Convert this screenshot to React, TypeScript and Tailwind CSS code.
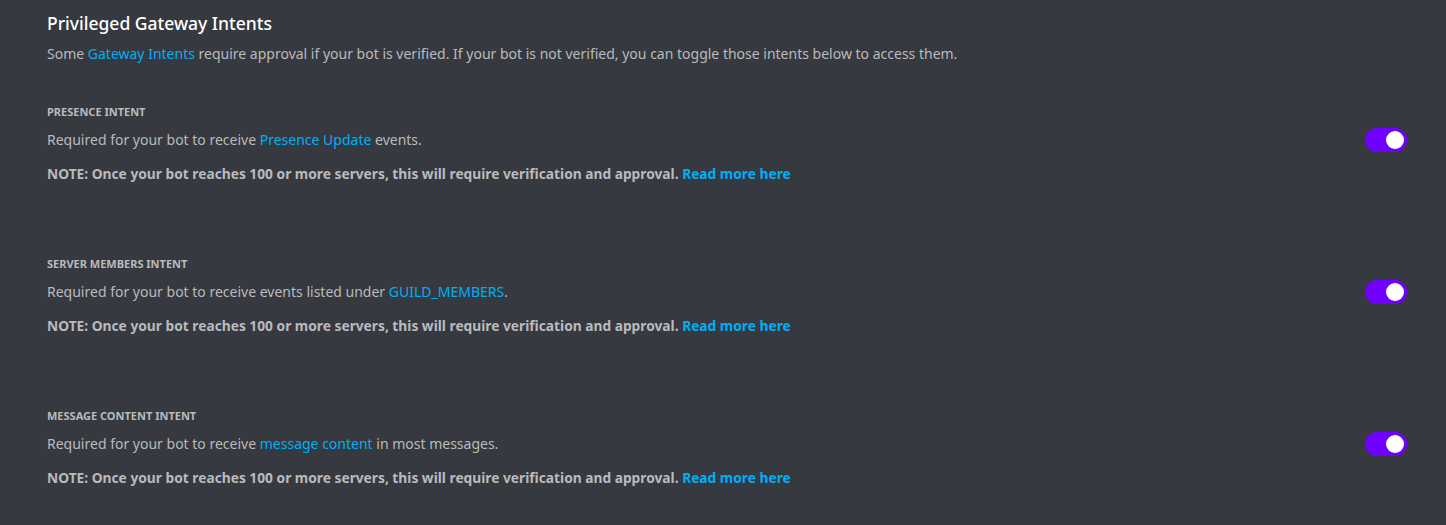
import { useState } from 'react';

interface Intent {
  label: string;
  before: string;
  link: string;
  after: string;
}

const intents: Intent[] = [
  { label: 'Presence Intent', before: 'Required for your bot to receive ', link: 'Presence Update', after: ' events.' },
  { label: 'Server Members Intent', before: 'Required for your bot to receive events listed under ', link: 'GUILD_MEMBERS', after: '.' },
  { label: 'Message Content Intent', before: 'Required for your bot to receive ', link: 'message content', after: ' in most messages.' },
];

function Toggle({ on, onChange }: { on: boolean; onChange: () => void }) {
  return (
    <button
      type="button"
      onClick={onChange}
      className={`flex h-6 w-[42px] flex-shrink-0 items-center rounded-full px-[3px] ${on ? 'justify-end bg-[#7000ff]' : 'justify-start bg-[#72767d]'}`}
      aria-pressed={on}
    >
      <span className="h-[18px] w-[18px] rounded-full bg-white" />
    </button>
  );
}

function IntentRow({ intent }: { intent: Intent }) {
  const [on, setOn] = useState(true);
  return (
    <div className="flex items-start justify-between">
      <div>
        <h5 className="text-[11px] font-bold uppercase leading-4 text-[#b9bbbe]">{intent.label}</h5>
        <p className="mt-[10px] text-sm leading-5 text-[#b9bbbe]">
          {intent.before}
          <a className="text-[#00aff4]">{intent.link}</a>
          {intent.after}
        </p>
        <p className="mt-[14px] text-[13.75px] font-bold leading-5 text-[#b9bbbe]">
          NOTE: Once your bot reaches 100 or more servers, this will require verification and approval.{' '}
          <a className="text-[#00aff4]">Read more here</a>
        </p>
      </div>
      <div className="mt-[24px]">
        <Toggle on={on} onChange={() => setOn(!on)} />
      </div>
    </div>
  );
}

export default function App() {
  return (
    <div className="min-h-[525px] bg-[#36393f] pl-[47px] pr-[39px] pt-[11px] font-['Noto_Sans',sans-serif]">
      <h2 className="text-[17.5px] font-medium leading-6 text-white">Privileged Gateway Intents</h2>
      <p className="mt-[9px] text-sm leading-5 text-[#b9bbbe]">
        Some <a className="text-[#00aff4]">Gateway Intents</a> require approval if your bot is verified. If your bot is not verified, you can toggle those intents below to access them.
      </p>
      <div className="mt-[40px] flex flex-col gap-[72px]">
        {intents.map((intent) => (
          <IntentRow key={intent.label} intent={intent} />
        ))}
      </div>
    </div>
  );
}
